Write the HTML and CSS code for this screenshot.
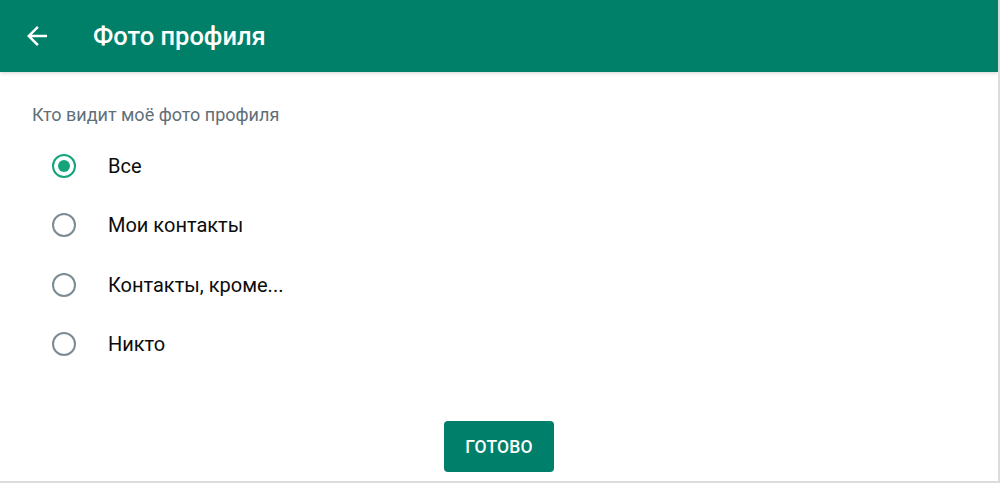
FILE: index.html
```html
<!DOCTYPE html>
<html lang="ru">
<head>
<meta charset="utf-8">
<title>Фото профиля</title>
<link rel="stylesheet" href="styles.css">
</head>
<body>
<div class="screen">
  <header class="appbar">
    <svg class="back" viewBox="0 0 24 24" aria-hidden="true"><path d="M20 11H7.83l5.59-5.59L12 4l-8 8 8 8 1.41-1.41L7.83 13H20v-2z" fill="#fff"/></svg>
    <h1 class="title">Фото профиля</h1>
  </header>
  <main class="content">
    <p class="subtitle">Кто видит моё фото профиля</p>
    <ul class="options">
      <li class="option"><span class="radio checked"></span><span class="label">Все</span></li>
      <li class="option"><span class="radio"></span><span class="label">Мои контакты</span></li>
      <li class="option"><span class="radio"></span><span class="label">Контакты, кроме...</span></li>
      <li class="option"><span class="radio"></span><span class="label">Никто</span></li>
    </ul>
    <div class="actions"><button class="done">ГОТОВО</button></div>
  </main>
</div>
</body>
</html>
```
FILE: styles.css
```css
* { box-sizing: border-box; }
html, body { margin: 0; padding: 0; background: #fff; }
body { font-family: Roboto, "Noto Sans", "Liberation Sans", sans-serif; }
.screen {
  width: 1000px;
  height: 483px;
  overflow: hidden;
  border-right: 2px solid #dcdcdc;
  border-bottom: 2px solid #dcdcdc;
  display: flex;
  flex-direction: column;
}
.appbar {
  height: 72px;
  flex: none;
  background: #008069;
  display: flex;
  align-items: center;
  padding-left: 22px;
  box-shadow: 0 1px 4px rgba(0,0,0,0.18);
  position: relative;
  z-index: 1;
}
.back { width: 30px; height: 30px; flex: none; }
.title {
  margin: 0 0 0 41px;
  color: #fff;
  font-size: 25.5px;
  font-weight: 500;
  line-height: 28px;
}
.content { display: flex; flex-direction: column; padding-left: 32px; }
.subtitle {
  margin: 33px 0 0;
  font-size: 18px;
  line-height: 20px;
  color: #5f6f78;
}
.options { list-style: none; margin: 11px 0 0; padding: 0; }
.option {
  height: 59.5px;
  display: flex;
  align-items: center;
  padding-left: 20px;
}
.radio {
  width: 24px;
  height: 24px;
  border-radius: 50%;
  border: 2.5px solid #7c8b93;
  flex: none;
  display: flex;
  align-items: center;
  justify-content: center;
}
.radio.checked { border-color: #13a47d; }
.radio.checked::after {
  content: "";
  width: 12px;
  height: 12px;
  border-radius: 50%;
  background: #13a47d;
}
.label {
  margin-left: 32px;
  font-size: 20px;
  color: #0c0c0c;
}
.actions {
  display: flex;
  justify-content: center;
  margin-top: 47px;
  margin-left: -32px;
}
.done {
  width: 110px;
  height: 51px;
  border: none;
  border-radius: 4px;
  background: #00806a;
  color: #fff;
  font-family: Roboto, "Noto Sans", sans-serif;
  font-size: 17.5px;
  font-weight: 500;
  letter-spacing: 0.2px;
}
```
